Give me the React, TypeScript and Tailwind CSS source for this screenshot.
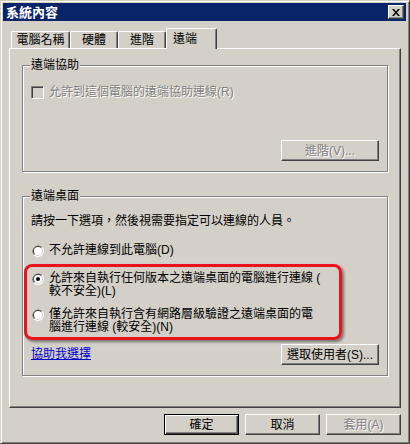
import React from "react";

const raised =
  "border border-t-white border-l-white border-r-[#404040] border-b-[#404040] shadow-[inset_-1px_-1px_0_#808080]";

const Radio = ({ checked }: { checked?: boolean }) => (
  <svg width="12" height="12" viewBox="0 0 12 12" className="shrink-0">
    <circle cx="6" cy="6" r="6" fill="#ffffff" />
    <path d="M1.76 10.24 A6 6 0 0 1 10.24 1.76 L6 6Z" fill="#808080" />
    <circle cx="6" cy="6" r="5" fill="#d4d0c8" />
    <path d="M2.46 9.54 A5 5 0 0 1 9.54 2.46 L6 6Z" fill="#404040" />
    <circle cx="6" cy="6" r="4" fill="#ffffff" />
    {checked && <circle cx="6" cy="6" r="2" fill="#000000" />}
  </svg>
);

const Button = ({
  label,
  disabled,
  isDefault,
  className,
}: {
  label: string;
  disabled?: boolean;
  isDefault?: boolean;
  className?: string;
}) => (
  <div
    className={
      "flex h-[21px] items-center justify-center bg-[#d4d0c8] text-[12px] leading-none " +
      (isDefault
        ? "border border-black shadow-[inset_1px_1px_0_#fff,inset_-1px_-1px_0_#404040,inset_-2px_-2px_0_#808080] "
        : raised + " ") +
      (disabled ? "text-[#808080] [text-shadow:1px_1px_0_#fff] " : "text-black ") +
      (className ?? "")
    }
  >
    {label}
  </div>
);

const GroupBox = ({
  title,
  className,
  children,
}: {
  title: string;
  className?: string;
  children: React.ReactNode;
}) => (
  <div
    className={
      "relative border border-[#808080] shadow-[inset_1px_1px_0_#fff,1px_1px_0_#fff] " +
      (className ?? "")
    }
  >
    <span className="absolute left-[7px] top-[-8px] bg-[#d4d0c8] px-[1px] text-[12px] leading-[14px] text-black">
      {title}
    </span>
    {children}
  </div>
);

const tabs = [
  { name: "電腦名稱", w: "w-[59px]" },
  { name: "硬體", w: "w-[48px]" },
  { name: "進階", w: "w-[48px]" },
];

export default function App() {
  return (
    <div className="h-[444px] w-[410px] bg-[#d4d0c8] font-['Liberation_Sans','Noto_Sans_CJK_TC',sans-serif]">
      <div className="flex h-[444px] w-[410px] flex-col border border-t-[#d4d0c8] border-l-[#d4d0c8] border-r-[#404040] border-b-[#404040] pt-[2px] pl-[2px] pr-[3px] shadow-[inset_1px_1px_0_#fff,inset_-1px_-1px_0_#808080]">
        {/* title bar */}
        <div className="flex h-[18px] items-center justify-between bg-[#0a246a] pl-[3px] pr-[2px]">
          <span className="text-[13px] font-bold leading-none text-white">系統內容</span>
          <div className={"flex h-[14px] w-[16px] items-center justify-center bg-[#d4d0c8] " + raised}>
            <svg width="8" height="7" viewBox="0 0 8 7">
              <path d="M0 0h2l2 2.5L6 0h2L5 3.5 8 7H6L4 4.5 2 7H0l3-3.5z" fill="#000" />
            </svg>
          </div>
        </div>

        {/* tabs */}
        <div className="ml-[8px] mt-[7px] flex h-[20px] items-end">
          {tabs.map((t) => (
            <div
              key={t.name}
              className={
                t.w +
                " flex h-[17px] items-center justify-center rounded-t-[2px] border-t border-l border-r border-t-white border-l-white border-r-[#404040] text-[12px] leading-none text-black shadow-[inset_-1px_0_0_#808080]"
              }
            >
              {t.name}
            </div>
          ))}
          <div className="relative z-10 -mb-px flex h-[21px] w-[51px] items-start rounded-t-[2px] border-t border-l border-r border-t-white border-l-white border-r-[#404040] bg-[#d4d0c8] pl-[6px] pt-[4px] text-[12px] leading-none text-black shadow-[inset_-1px_0_0_#808080]">
            遠端
          </div>
        </div>

        {/* panel */}
        <div className={"ml-[6px] mr-[5px] flex h-[360px] flex-col px-[12px] pt-[16px] " + raised}>
          <GroupBox title="遠端協助" className="flex h-[107px] flex-col justify-between pl-[8px] pr-[8px] pt-[20px] pb-[10px]">
            <div className="flex items-center gap-[5px]">
              <div className="h-[13px] w-[13px] border border-t-[#808080] border-l-[#808080] border-r-white border-b-white bg-[#d4d0c8] shadow-[inset_1px_1px_0_#404040]" />
              <span className="text-[12px] leading-[13px] text-[#808080] [text-shadow:1px_1px_0_#fff]">
                允許到這個電腦的遠端協助連線(R)
              </span>
            </div>
            <div className="flex justify-end">
              <Button label="進階(V)..." disabled className="w-[98px]" />
            </div>
          </GroupBox>

          <GroupBox title="遠端桌面" className="mt-[24px] flex h-[180px] flex-col pl-[8px] pr-[8px] pt-[18px] pb-[10px]">
            <p className="text-[12px] leading-[13px] text-black">請按一下選項，然後視需要指定可以連線的人員。</p>
            <div className="mt-[16px] flex items-center gap-[5px] pl-[1px]">
              <Radio />
              <span className="text-[12px] leading-[13px] text-black">不允許連線到此電腦(D)</span>
            </div>

            <div className="-ml-[7px] mt-[7px] flex w-[318px] flex-col gap-[10px] rounded-[8px] border-[3px] border-[#e8141c] pl-[5px] pt-[5px] pb-[3px] shadow-[2px_2px_3px_rgba(0,0,0,0.45)]">
              <div className="flex items-start gap-[5px]">
                <div className="pt-[1px]">
                  <Radio checked />
                </div>
                <span className="text-[12px] leading-[13px] text-black">
                  允許來自執行任何版本之遠端桌面的電腦進行連線 (
                  <br />
                  較不安全)(L)
                </span>
              </div>
              <div className="flex items-start gap-[5px]">
                <div className="pt-[1px]">
                  <Radio />
                </div>
                <span className="text-[12px] leading-[13px] text-black">
                  僅允許來自執行含有網路層級驗證之遠端桌面的電
                  <br />
                  腦進行連線 (較安全)(N)
                </span>
              </div>
            </div>

            <div className="mt-auto flex items-end justify-between">
              <span className="mb-[4px] text-[12px] leading-[13px] text-[#0000cc] underline">協助我選擇</span>
              <Button label="選取使用者(S)..." className="w-[98px]" />
            </div>
          </GroupBox>
        </div>

        {/* dialog buttons */}
        <div className="mr-[5px] mt-[6px] flex justify-end gap-[6px]">
          <Button label="確定" isDefault className="w-[75px]" />
          <Button label="取消" className="w-[75px]" />
          <Button label="套用(A)" disabled className="w-[75px]" />
        </div>
      </div>
    </div>
  );
}
